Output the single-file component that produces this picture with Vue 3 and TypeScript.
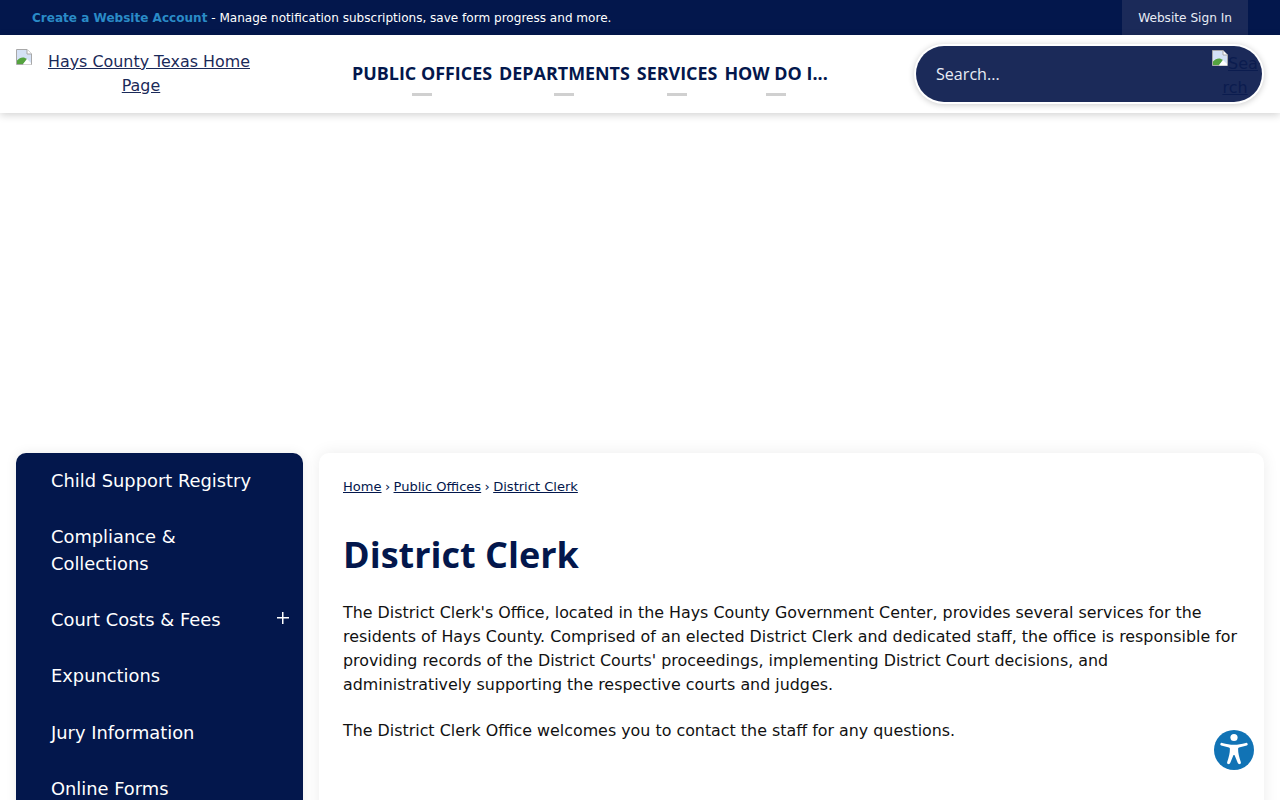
<script setup lang="ts">
const navItems: string[] = ['PUBLIC OFFICES', 'DEPARTMENTS', 'SERVICES', 'HOW DO I...']
const sideItems: { label: string; plus?: boolean }[] = [
  { label: 'Child Support Registry' },
  { label: 'Compliance & Collections' },
  { label: 'Court Costs & Fees', plus: true },
  { label: 'Expunctions' },
  { label: 'Jury Information' },
  { label: 'Online Forms' },
]
</script>

<template>
  <div class="page">
    <div class="topbar">
      <p class="notice"><a class="create">Create a Website Account</a> - Manage notification subscriptions, save form progress and more.</p>
      <a class="signin">Website Sign In</a>
    </div>
    <header class="header">
      <a class="logo">
        <svg class="broken" width="16" height="16" viewBox="0 0 16 16"><path d="M0.5 0.5H11L15.5 5V15.5H0.5Z" fill="#d5e2f6" stroke="#a8a8a8"/><path d="M11 0.5V5H15.5" fill="#fff" stroke="#a8a8a8"/><path d="M1 15V11.5C4 8 8 7.5 11 10L7 15Z" fill="#55a33f"/><path d="M11 10L15 14V15.5H7Z" fill="#fff"/></svg><span class="logotext">Hays County Texas Home</span><span class="spacer"></span><br><span class="logotext">Page</span>
      </a>
      <nav class="nav">
        <a v-for="item in navItems" :key="item" class="navitem">{{ item }}<span class="dash"></span></a>
      </nav>
      <div class="search">
        <span class="placeholder">Search...</span>
        <a class="searchbtn"><svg class="broken" width="16" height="16" viewBox="0 0 16 16"><path d="M0.5 0.5H11L15.5 5V15.5H0.5Z" fill="#d5e2f6" stroke="#a8a8a8"/><path d="M11 0.5V5H15.5" fill="#fff" stroke="#a8a8a8"/><path d="M1 15V11.5C4 8 8 7.5 11 10L7 15Z" fill="#55a33f"/><path d="M11 10L15 14V15.5H7Z" fill="#fff"/></svg>Search</a>
      </div>
    </header>
    <main class="main">
      <aside class="side">
        <a v-for="s in sideItems" :key="s.label" class="sideitem">
          <span class="sidelabel">{{ s.label }}</span>
          <span v-if="s.plus" class="plus"></span>
        </a>
      </aside>
      <section class="card">
        <div class="crumbs"><a>Home</a><span class="sep">›</span><a>Public Offices</a><span class="sep">›</span><a>District Clerk</a></div>
        <h1 class="title">District Clerk</h1>
        <p class="para">The District Clerk's Office, located in the Hays County Government Center, provides several services for the residents of Hays County. Comprised of an elected District Clerk and dedicated staff, the office is responsible for providing records of the District Courts' proceedings, implementing District Court decisions, and administratively supporting the respective courts and judges.</p>
        <p class="para second">The District Clerk Office welcomes you to contact the staff for any questions.</p>
      </section>
    </main>
    <a class="a11y" aria-label="Accessibility">
      <svg width="42" height="42" viewBox="0 0 42 42">
        <circle cx="21" cy="21" r="20" fill="#1173b5"/>
        <circle cx="21" cy="8.5" r="3.6" fill="#fff"/>
        <path d="M7.5 14.5C7 15.3 7.3 16.2 8.2 16.5L16 18.6C16.6 18.8 16.9 19.2 16.9 19.8C16.9 24 16 28 14.2 33C13.9 34 14.3 34.8 15.1 35.1C16 35.4 16.8 35 17.2 34.1L20.3 26.4C20.5 25.9 21.5 25.9 21.7 26.4L24.8 34.1C25.2 35 26 35.4 26.9 35.1C27.7 34.8 28.1 34 27.8 33C26 28 25.1 24 25.1 19.8C25.1 19.2 25.4 18.8 26 18.6L33.8 16.5C34.7 16.2 35 15.3 34.5 14.5C34.1 13.9 33.5 13.7 32.8 13.9C28.5 15 25 15.7 21 15.7C17 15.7 13.5 15 9.2 13.9C8.5 13.7 7.9 13.9 7.5 14.5Z" fill="#fff"/>
      </svg>
    </a>
  </div>
</template>

<style>
html, body { margin: 0; background: #fff; }
</style>

<style scoped>
.page {
  position: relative;
  height: 800px;
  overflow: hidden;
  background: #fff;
  font-family: "DejaVu Sans", sans-serif;
  color: #111;
}
.topbar {
  height: 35px;
  background: #03174c;
  display: flex;
  align-items: center;
  justify-content: space-between;
  padding: 0 32px;
  font-size: 12.06px;
  color: #fff;
}
.notice { margin: 0; }
.create { color: #2a8bc7; font-weight: 700; }
.signin {
  height: 35px;
  line-height: 36px;
  padding: 0 16px;
  background: #1b2a59;
  color: #e8ecf5;
  font-size: 12.15px;
}
.header {
  position: relative;
  height: 78px;
  background: #fff;
  box-shadow: 0 2px 8px rgba(0, 0, 0, 0.18);
  display: flex;
  align-items: center;
  padding: 0 16px;
}
.logo {
  width: 250px;
  flex: none;
  margin-bottom: 2px;
  font-size: 15.9px;
  line-height: 24px;
  text-align: center;
  white-space: nowrap;
  color: #1b2a59;
}
.logotext { text-decoration: underline; }
.spacer { display: inline-block; width: 16px; }
.broken { display: inline-block; vertical-align: 2px; margin-right: 16px; }
.nav {
  display: flex;
  gap: 7px;
  margin-left: 86px;
  margin-top: 8px;
  font-family: "Open Sans", sans-serif;
}
.navitem {
  display: flex;
  flex-direction: column;
  align-items: center;
  font-size: 17.92px;
  font-weight: 700;
  color: #03174c;
  white-space: nowrap;
  line-height: 24px;
}
.dash {
  width: 20px;
  height: 3px;
  background: #d0d0d0;
  margin-top: 8px;
}
.search {
  position: absolute;
  left: 916px;
  top: 11px;
  width: 346px;
  height: 56px;
  border-radius: 28px;
  background: #1b2a59;
  box-shadow: 0 0 0 2px #fff, 0 1px 6px 2px rgba(0, 0, 0, 0.2);
  display: flex;
  align-items: center;
  overflow: hidden;
}
.placeholder {
  margin-left: 20px;
  font-family: "Open Sans", sans-serif;
  font-size: 16.1px;
  color: #e8ecf5;
}
.searchbtn {
  position: absolute;
  left: 296px;
  top: 4px;
  width: 46px;
  font-size: 16px;
  line-height: 24px;
  text-align: center;
  color: #0b1c4f;
  text-decoration: underline;
  word-break: break-all;
}
.searchbtn .broken { margin-right: 0; vertical-align: 3px; }
.main {
  display: flex;
  gap: 16px;
  padding: 340px 16px 0;
  align-items: flex-start;
}
.side {
  width: 287px;
  flex: none;
  background: #03174c;
  border-radius: 10px 10px 0 0;
  box-shadow: 0 0 12px rgba(0, 0, 0, 0.08);
  color: #fff;
  padding-bottom: 40px;
}
.sideitem {
  display: flex;
  justify-content: space-between;
  align-items: center;
  padding: 14.4px 14px 14.8px 35px;
  font-size: 17.85px;
  line-height: 27px;
}
.side .sideitem:first-child { padding-top: 14px; padding-bottom: 14.6px; }
.sidelabel { max-width: 215px; }
.plus {
  width: 12px;
  height: 12px;
  margin-top: -4px;
  background:
    linear-gradient(#fff, #fff) center / 12px 1.5px no-repeat,
    linear-gradient(#fff, #fff) center / 1.5px 12px no-repeat;
}
.card {
  flex: 1;
  min-height: 500px;
  background: #fff;
  border-radius: 10px 10px 0 0;
  box-shadow: 0 0 16px rgba(0, 0, 0, 0.08);
  padding: 25px 24px 24px;
  box-sizing: border-box;
}
.crumbs {
  font-size: 13.05px;
  line-height: 18px;
  color: #03174c;
}
.crumbs a { text-decoration: underline; }
.sep { margin: 0 3.4px; }
.title {
  margin: 33px 0 0;
  font-family: "Open Sans", sans-serif;
  font-size: 36px;
  line-height: 52px;
  font-weight: 700;
  color: #03174c;
}
.para {
  margin: 20px 0 0;
  font-size: 15.89px;
  line-height: 24px;
  color: #111;
}
.second { margin-top: 22px; }
.a11y {
  position: absolute;
  left: 1213px;
  top: 729px;
  width: 42px;
  height: 42px;
}
</style>
